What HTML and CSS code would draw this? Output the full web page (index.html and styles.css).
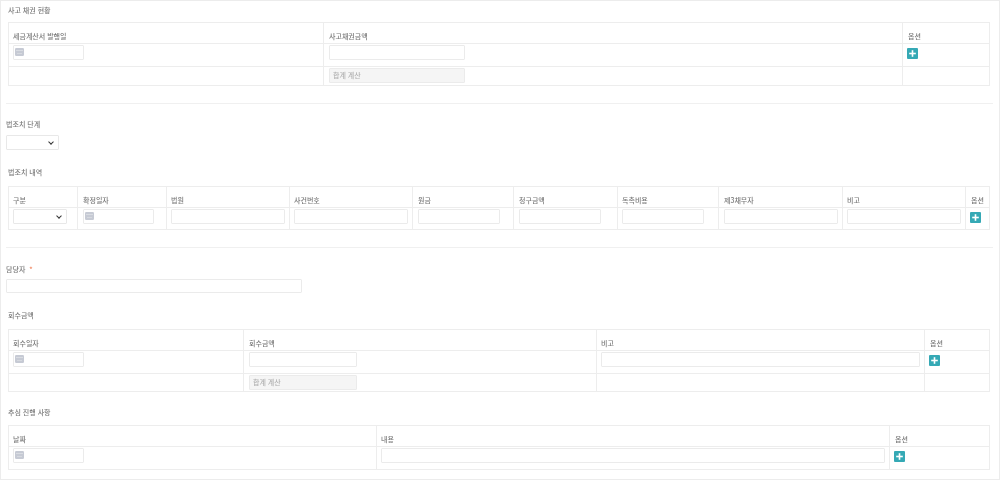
FILE: index.html
```html
<!DOCTYPE html>
<html lang="ko">
<head>
  <meta charset="UTF-8" />
  <title>사고 채권</title>
  <link rel="stylesheet" href="styles.css">
</head>
<body>
  <svg width="0" height="0" class="defs">
    <symbol id="cal" viewBox="0 0 9 8">
      <rect x="0" y="0" width="9" height="8" rx="1.2" fill="#c6cad4"/>
      <rect x="1" y="2" width="7" height="1" fill="#d9dce2"/>
      <rect x="2" y="5" width="5" height="1" fill="#d6d9df"/>
    </symbol>
    <symbol id="plus" viewBox="0 0 11 11">
      <rect x="4.7" y="2.2" width="1.6" height="6.6" fill="#fff"/>
      <rect x="2.2" y="4.7" width="6.6" height="1.6" fill="#fff"/>
    </symbol>
  </svg>

  <div class="page">
    <!-- 사고 채권 현황 -->
    <h3 class="title first">사고 채권 현황</h3>
    <table class="grid t1">
      <colgroup><col width="315"><col width="579"><col></colgroup>
      <tr class="head"><th>세금계산서 발행일</th><th>사고채권금액</th><th>옵션</th></tr>
      <tr class="row">
        <td><div class="input date"><svg class="cal"><use href="#cal"/></svg></div></td>
        <td><div class="input w136"></div></td>
        <td><button class="add"><svg><use href="#plus"/></svg></button></td>
      </tr>
      <tr class="total">
        <td></td>
        <td><div class="input sum w136">합계 계산</div></td>
        <td></td>
      </tr>
    </table>

    <hr class="line l1">

    <label class="label l-step">법조치 단계</label>
    <div class="select s53"></div>

    <!-- 법조치 내역 -->
    <h3 class="title t-law">법조치 내역</h3>
    <table class="grid t2">
      <colgroup>
        <col width="69"><col width="89"><col width="123"><col width="123"><col width="101">
        <col width="104"><col width="101"><col width="124"><col width="123"><col>
      </colgroup>
      <tr class="head">
        <th>구분</th><th>확정일자</th><th>법원</th><th>사건번호</th><th>원금</th>
        <th>청구금액</th><th>독촉비용</th><th>제3채무자</th><th>비고</th><th>옵션</th>
      </tr>
      <tr class="row">
        <td><div class="select s54"></div></td>
        <td><div class="input date"><svg class="cal"><use href="#cal"/></svg></div></td>
        <td><div class="input w114"></div></td>
        <td><div class="input w114"></div></td>
        <td><div class="input w82"></div></td>
        <td><div class="input w82"></div></td>
        <td><div class="input w82"></div></td>
        <td><div class="input w114"></div></td>
        <td><div class="input w114"></div></td>
        <td><button class="add"><svg><use href="#plus"/></svg></button></td>
      </tr>
    </table>

    <hr class="line l2">

    <label class="label l-owner">담당자 <span class="req">*</span></label>
    <div class="input owner"></div>

    <!-- 회수금액 -->
    <h3 class="title t-back">회수금액</h3>
    <table class="grid t3">
      <colgroup><col width="235"><col width="353"><col width="328"><col></colgroup>
      <tr class="head"><th>회수일자</th><th>회수금액</th><th>비고</th><th>옵션</th></tr>
      <tr class="row">
        <td><div class="input date"><svg class="cal"><use href="#cal"/></svg></div></td>
        <td><div class="input w108"></div></td>
        <td><div class="input"></div></td>
        <td><button class="add"><svg><use href="#plus"/></svg></button></td>
      </tr>
      <tr class="total">
        <td></td>
        <td><div class="input sum w108">합계 계산</div></td>
        <td></td>
        <td></td>
      </tr>
    </table>

    <!-- 추심 진행 사항 -->
    <h3 class="title t-prog">추심 진행 사항</h3>
    <table class="grid t4">
      <colgroup><col width="368"><col width="513"><col></colgroup>
      <tr class="head"><th>날짜</th><th>내용</th><th>옵션</th></tr>
      <tr class="row">
        <td><div class="input date"><svg class="cal"><use href="#cal"/></svg></div></td>
        <td><div class="input"></div></td>
        <td><button class="add"><svg><use href="#plus"/></svg></button></td>
      </tr>
    </table>
  </div>
</body>
</html>
```

FILE: styles.css
```css
/* Global */
* { box-sizing: border-box; margin: 0; padding: 0; }

html, body { height: 100%; }

body {
  background-color: #fff;
  font-family: "Noto Sans CJK KR", "Noto Sans", sans-serif;
  font-size: 7px;
  color: #7a7a7a;
  overflow: hidden;
}

.defs { position: absolute; }

/* the whole capture is slightly soft, as if scaled down */
.page {
  width: 1000px;
  height: 480px;
  border: 1px solid #ececec;
  padding: 0 5px;
  filter: blur(0.3px);
}

/* Headings */
.title {
  font-size: 7px;
  font-weight: 500;
  line-height: 12px;
  color: #7a7a7a;
  margin-left: 2px;
}

.title.first { margin-top: 3px; margin-bottom: 6px; }
.t-law { margin-top: 16px; margin-bottom: 8px; }
.t-back { margin-top: 16px; margin-bottom: 8px; }
.t-prog { margin-top: 14px; margin-bottom: 7px; }

.label {
  display: block;
  font-size: 7px;
  font-weight: 500;
  line-height: 12px;
  color: #7a7a7a;
}

.l-step { margin-top: 14px; margin-bottom: 5px; }
.l-owner { margin-top: 15px; margin-bottom: 4px; }
.req { color: #f0825a; margin-left: 2px; }

.line {
  border: 0;
  border-top: 1px solid #f0f0f0;
  width: 987px;
}

.l1 { margin-top: 17px; }
.l2 { margin-top: 17px; }

/* Tables */
.grid {
  width: 982px;
  margin-left: 2px;
  border-collapse: collapse;
  table-layout: fixed;
  border: 1px solid #ebebeb;
}

.grid th,
.grid td {
  border: 1px solid #ededed;
  padding: 0 4px 0 5px;
  text-align: left;
  font-weight: 500;
  vertical-align: top;
  white-space: nowrap;
}

.grid th:first-child,
.grid td:first-child { padding-left: 4px; }

/* these columns sit a pixel further left */
.t2 :is(th, td):is(:nth-child(3), :nth-child(4), :nth-child(7), :nth-child(9)),
.t3 :is(th, td):nth-child(3),
.t4 :is(th, td):nth-child(2) { padding-left: 4px; }

.grid th {
  vertical-align: bottom;
  line-height: 12px;
  padding-bottom: 1px;
}

.head { height: 21px; }
.row { height: 23px; }
.total { height: 19px; }

.t2 .row { height: 22px; }
.t3 .total { height: 18px; }

.row td { padding-top: 1px; }
.total td { padding-top: 1px; }

/* Form bits */
.input {
  height: 15px;
  border: 1px solid #ebebeb;
  border-radius: 1px;
  background-color: #fff;
}

.date { width: 71px; padding: 2px 0 0 1px; }
.w136 { width: 136px; }
.w114 { width: 114px; }
.w108 { width: 108px; }
.w82 { width: 82px; }

.sum {
  background-color: #f5f5f5;
  color: #b0b0b0;
  padding-left: 3px;
  line-height: 13px;
}

.owner { width: 296px; height: 14px; }

.cal { display: block; width: 9px; height: 8px; }

.select {
  position: relative;
  height: 15px;
  border: 1px solid #e8e8e8;
  border-radius: 1px;
  background-color: #fff;
}

.select::after {
  content: "";
  position: absolute;
  right: 5px;
  top: 3.5px;
  width: 3px;
  height: 3px;
  border-right: 1.5px solid #333;
  border-bottom: 1.5px solid #333;
  transform: rotate(45deg);
}

.s53 { width: 53px; }
.s54 { width: 54px; }

.add {
  display: block;
  width: 11px;
  height: 11px;
  border: 0;
  border-radius: 1px;
  background-color: #35a9b5;
  margin: 3px 0 0 -1px;
}

.add svg { display: block; width: 11px; height: 11px; }
```
